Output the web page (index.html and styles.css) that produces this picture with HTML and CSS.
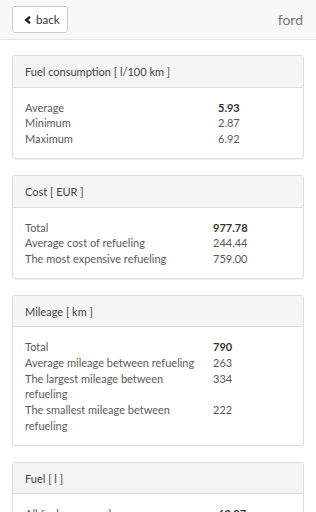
FILE: index.html
```html
<!DOCTYPE html>
<html lang="en">
<head>
    <meta charset="UTF-8">
    <meta name="viewport" content="width=device-width, initial-scale=1.0">
    <title>ford - statistics</title>
    <link rel="stylesheet" href="styles.css">
</head>
<body>
    <!-- Top bar -->
    <div class="topbar">
        <button class="back-btn">
            <svg class="chevron" width="8" height="8" viewBox="0 0 8 8">
                <polyline points="6,0.8 2.2,4 6,7.2" fill="none" stroke="#222" stroke-width="2.4" stroke-linejoin="miter"/>
            </svg>
            back
        </button>
        <span class="car-name">ford</span>
    </div>

    <div class="content">
        <div class="panel">
            <div class="panel-heading">Fuel consumption [ l/100 km ]</div>
            <div class="panel-body">
                <table class="stats narrow">
                    <tr><td>Average</td><td class="val strong">5.93</td></tr>
                    <tr><td>Minimum</td><td class="val">2.87</td></tr>
                    <tr><td>Maximum</td><td class="val">6.92</td></tr>
                </table>
            </div>
        </div>

        <div class="panel">
            <div class="panel-heading">Cost [ EUR ]</div>
            <div class="panel-body">
                <table class="stats">
                    <tr><td>Total</td><td class="val strong">977.78</td></tr>
                    <tr><td>Average cost of refueling</td><td class="val">244.44</td></tr>
                    <tr><td>The most expensive refueling</td><td class="val">759.00</td></tr>
                </table>
            </div>
        </div>

        <div class="panel">
            <div class="panel-heading">Mileage [ km ]</div>
            <div class="panel-body">
                <table class="stats">
                    <tr><td>Total</td><td class="val strong">790</td></tr>
                    <tr><td>Average mileage between refueling</td><td class="val">263</td></tr>
                    <tr><td>The largest mileage between refueling</td><td class="val">334</td></tr>
                    <tr><td>The smallest mileage between refueling</td><td class="val">222</td></tr>
                </table>
            </div>
        </div>

        <div class="panel">
            <div class="panel-heading">Fuel [ l ]</div>
            <div class="panel-body">
                <table class="stats narrow">
                    <tr><td>All fuel consumed</td><td class="val strong">62.27</td></tr>
                    <tr><td>Average fuel per refueling</td><td class="val">15.57</td></tr>
                </table>
            </div>
        </div>
    </div>
</body>
</html>
```

FILE: styles.css
```css
body {
    font-family: Lato, "Open Sans", sans-serif;
    font-size: 11px;
    line-height: 15.7px;
    color: #5a5a5a;
    background-color: #fff;
    margin: 0;
}
.topbar {
    display: flex;
    justify-content: space-between;
    align-items: center;
    height: 39px;
    padding: 0 12px;
    background-color: #f8f8f8;
    border-bottom: 1px solid #e7e7e7;
}
.back-btn {
    display: flex;
    align-items: center;
    gap: 4px;
    height: 27px;
    width: 56px;
    padding: 0 0 0 11px;
    font-family: Lato, sans-serif;
    font-size: 11.5px;
    color: #333;
    background-color: #fff;
    border: 1px solid #ccc;
    border-radius: 3px;
}
.chevron {
    display: block;
}
.car-name {
    font-size: 14px;
    color: #777;
    margin-right: 1px;
}
.content {
    padding: 15px 12px;
}
/* Bootstrap-like panels */
.panel {
    border: 1px solid #ddd;
    border-radius: 3px;
    box-shadow: 0 1px 1px rgba(0, 0, 0, 0.05);
    margin-bottom: 16px;
}
.panel-heading {
    background-color: #f5f5f5;
    border-bottom: 1px solid #ddd;
    padding: 8px 12px 7px;
    color: #444;
}
.panel-body {
    padding: 12px 12px 11px;
}
.stats {
    width: 100%;
    border-collapse: collapse;
}
.stats td {
    padding: 0 8px 0 0;
    vertical-align: top;
}
.stats .val {
    width: 78px;
    padding: 0;
}
.stats.narrow .val {
    width: 73px;
}
.stats .strong {
    font-weight: bold;
    color: #333;
}
```
